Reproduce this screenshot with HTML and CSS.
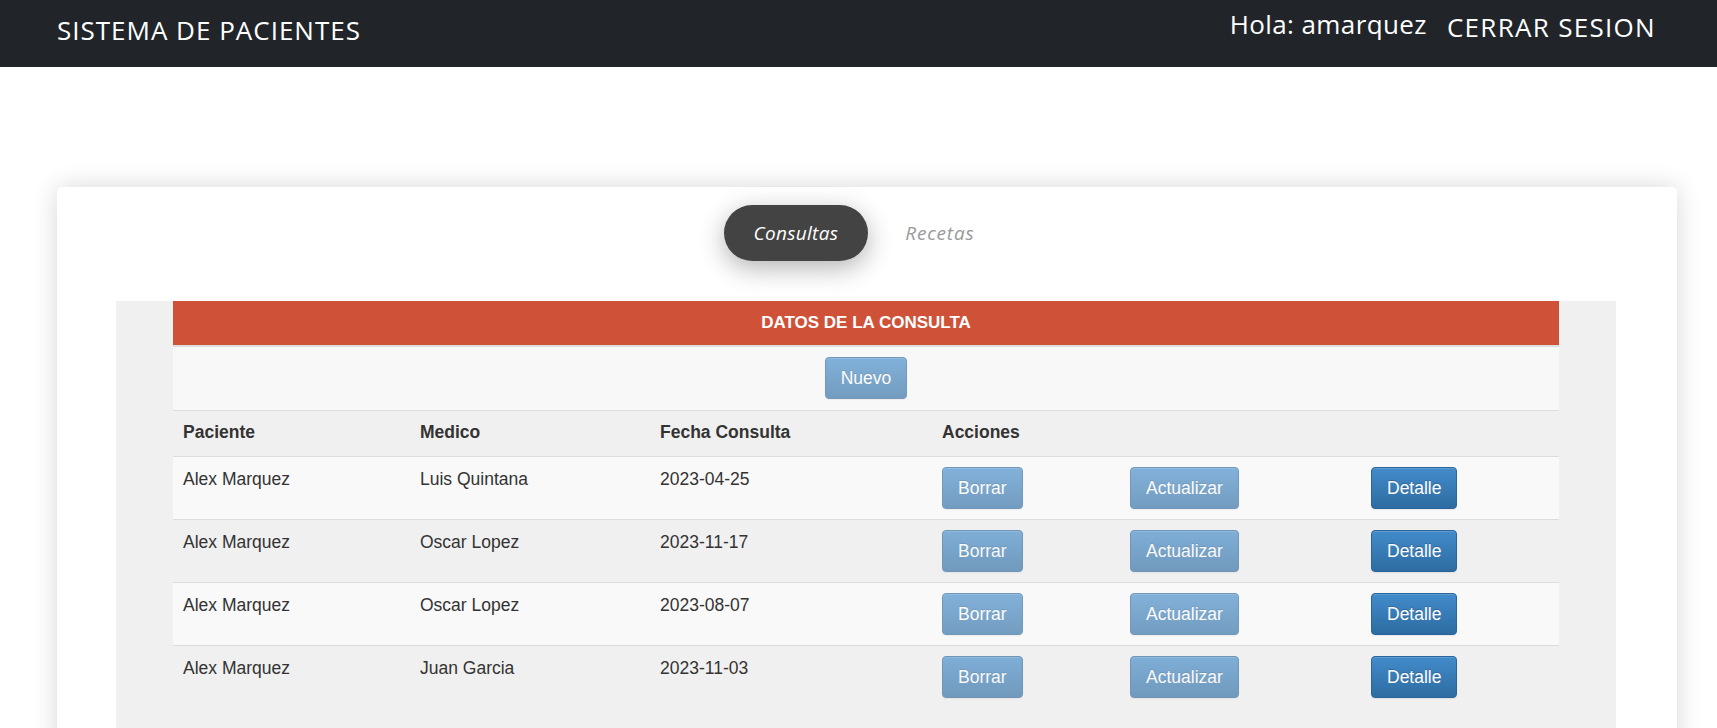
FILE: index.html
```html
<!DOCTYPE html>
<html lang="es">
<head>
<meta charset="utf-8">
<title>Sistema de Pacientes</title>
<link rel="stylesheet" href="styles.css">
</head>
<body>
<header class="navbar">
  <div class="brand">SISTEMA DE PACIENTES</div>
  <nav class="user-nav">
    <span class="greeting">Hola: amarquez</span>
    <a class="logout" href="#">CERRAR SESION</a>
  </nav>
</header>
<main class="page">
  <section class="card">
    <ul class="tabs">
      <li class="tab tab-active">Consultas</li>
      <li class="tab tab-recetas">Recetas</li>
    </ul>
    <div class="panel">
      <table class="grid">
        <colgroup>
          <col class="c1"><col class="c2"><col class="c3"><col class="c4"><col class="c5"><col class="c6">
        </colgroup>
        <thead>
          <tr class="title-row"><th colspan="6">DATOS DE LA CONSULTA</th></tr>
          <tr class="new-row"><td colspan="6"><button class="btn btn-faded">Nuevo</button></td></tr>
          <tr class="head-row"><th>Paciente</th><th>Medico</th><th>Fecha Consulta</th><th colspan="3">Acciones</th></tr>
        </thead>
        <tbody>
          <tr><td>Alex Marquez</td><td>Luis Quintana</td><td>2023-04-25</td><td><button class="btn btn-faded">Borrar</button></td><td><button class="btn btn-faded">Actualizar</button></td><td><button class="btn">Detalle</button></td></tr>
          <tr><td>Alex Marquez</td><td>Oscar Lopez</td><td>2023-11-17</td><td><button class="btn btn-faded">Borrar</button></td><td><button class="btn btn-faded">Actualizar</button></td><td><button class="btn">Detalle</button></td></tr>
          <tr><td>Alex Marquez</td><td>Oscar Lopez</td><td>2023-08-07</td><td><button class="btn btn-faded">Borrar</button></td><td><button class="btn btn-faded">Actualizar</button></td><td><button class="btn">Detalle</button></td></tr>
          <tr><td>Alex Marquez</td><td>Juan Garcia</td><td>2023-11-03</td><td><button class="btn btn-faded">Borrar</button></td><td><button class="btn btn-faded">Actualizar</button></td><td><button class="btn">Detalle</button></td></tr>
        </tbody>
      </table>
    </div>
  </section>
</main>
</body>
</html>
```
FILE: styles.css
```css
* { box-sizing: border-box; }
html, body { margin: 0; padding: 0; background: #fff; }
body {
  font-family: "Liberation Sans", Arial, sans-serif;
  color: #333;
  overflow: hidden;
}

.navbar {
  height: 67px;
  background: #212529;
  display: flex;
  justify-content: space-between;
  align-items: flex-start;
  padding: 6px 61px 0 57px;
  font-family: "Open Sans", sans-serif;
  font-size: 26px;
  letter-spacing: 1px;
  color: #fff;
}
.brand { margin-top: 5.5px; white-space: nowrap; }
.user-nav { display: flex; align-items: flex-start; gap: 20px; }
.greeting { white-space: nowrap; letter-spacing: 0.4px; }
.logout { color: #fff; text-decoration: none; margin-top: 3px; white-space: nowrap; letter-spacing: 1.3px; }

.page { padding: 120px 40px 0 57px; }

.card {
  background: #fff;
  border-radius: 5px;
  box-shadow: 0 0 26px rgba(0, 0, 0, 0.16);
  padding: 18px 61px 40px 59px;
}

.tabs {
  list-style: none;
  margin: 0;
  padding: 0;
  display: flex;
  justify-content: center;
  gap: 7px;
  font-family: "Open Sans", sans-serif;
  font-style: italic;
  font-size: 19px;
  letter-spacing: 0.3px;
}
.tab {
  height: 56px;
  line-height: 56px;
  padding: 0 30px;
  border-radius: 28px;
  color: #999;
}
.tab-active {
  background: #434343;
  color: #fff;
  box-shadow: 0 7px 26px rgba(0, 0, 0, 0.3);
}
.tab-recetas { padding: 0 34px 0 30px; letter-spacing: 0.8px; }

.panel {
  margin-top: 40px;
  background: #f0f0f0;
  padding: 0 57px 60px;
}

.grid {
  width: 100%;
  table-layout: fixed;
  border-collapse: collapse;
  font-size: 17.5px;
  line-height: 25px;
}
.c1 { width: 237px; }
.c2 { width: 240px; }
.c3 { width: 282px; }
.c4 { width: 188px; }
.c5 { width: 241px; }
.c6 { width: 198px; }

.grid th, .grid td {
  text-align: left;
  vertical-align: top;
  padding: 10px;
  border-top: 1px solid #ddd;
}

.title-row th {
  background: #cf5238;
  color: #fff;
  font-size: 17px;
  font-weight: bold;
  text-align: center;
  height: 44px;
  padding: 0;
  line-height: 44px;
  vertical-align: middle;
  border-top: none;
  border-bottom: 2px solid #ddd;
}

.new-row td {
  background: #f8f8f8;
  text-align: center;
  border-top: 2px solid #ddd;
  padding: 10px 10px 11px;
}

.head-row th {
  font-weight: bold;
  padding: 9px 10px 11px;
}

.grid tbody tr:nth-child(odd) td { background: #f9f9f9; }

.btn {
  display: inline-block;
  height: 42px;
  padding: 0 15px;
  margin: 0;
  font-family: "Liberation Sans", Arial, sans-serif;
  font-size: 17.5px;
  line-height: 40px;
  color: #fff;
  border: 1px solid #2b669a;
  border-radius: 4px;
  background: linear-gradient(to bottom, #428bca 0%, #2d6ca2 100%);
  text-shadow: 0 -1px 0 rgba(0, 0, 0, 0.2);
  box-shadow: inset 0 1px 0 rgba(255, 255, 255, 0.15), 0 1px 1px rgba(0, 0, 0, 0.075);
  cursor: pointer;
}
.btn-faded { opacity: 0.65; }
```
